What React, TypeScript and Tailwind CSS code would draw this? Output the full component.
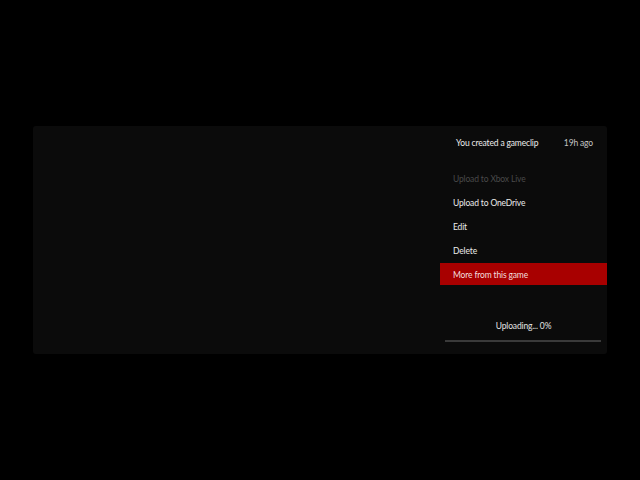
import React from 'react';

const items = [
  { label: 'Upload to Xbox Live', disabled: true },
  { label: 'Upload to OneDrive' },
  { label: 'Edit' },
  { label: 'Delete' },
  { label: 'More from this game', active: true },
];

export default function App() {
  return (
    <div className="w-[640px] h-[480px] bg-black pt-[126px] pl-[33px]" style={{ fontFamily: 'Lato, "Noto Sans", sans-serif' }}>
      <div className="w-[574px] h-[228px] bg-[#0b0b0b] rounded-[3px] flex text-[8.5px] tracking-[-0.15px]">
        <div className="flex-1" />
        <div className="w-[167px] flex flex-col">
          <div className="h-[34px] flex items-center justify-between pl-[16px] pr-[14px] text-[#ececec]">
            <span>You created a gameclip</span>
            <span className="text-[#c4c4c4]">19h ago</span>
          </div>
          <div className="mt-[7px] flex flex-col gap-[2px]">
            {items.map((it) => (
              <div
                key={it.label}
                className={`h-[22px] pt-[3px] flex items-center pl-[13px] ${
                  it.active ? 'bg-[#a80000] text-[#f2dede]' : it.disabled ? 'text-[#4a4a4a]' : 'text-[#ececec]'
                }`}
              >
                {it.label}
              </div>
            ))}
          </div>
          <div className="mt-[35px] text-center text-[#e4e4e4]">Uploading... 0%</div>
          <div className="mt-[7px] ml-[5px] w-[156px] h-[2px] bg-[#3a3a3a]" />
        </div>
      </div>
    </div>
  );
}
